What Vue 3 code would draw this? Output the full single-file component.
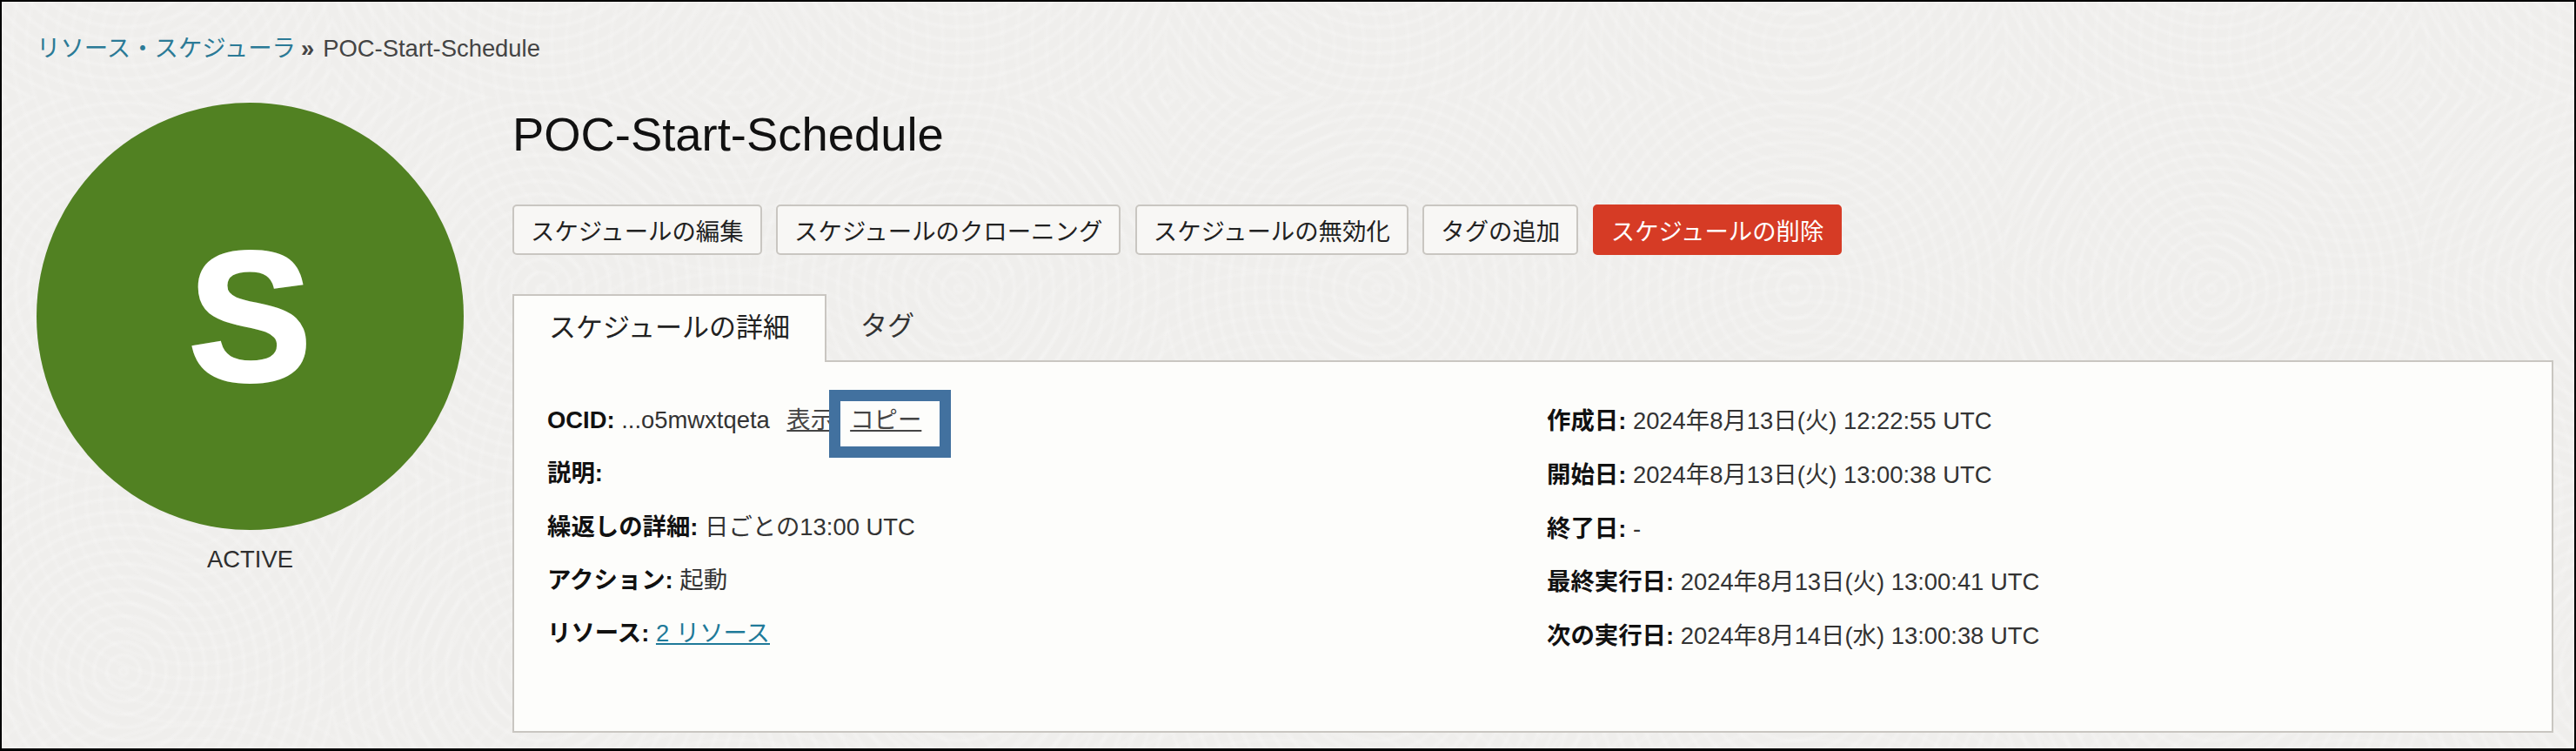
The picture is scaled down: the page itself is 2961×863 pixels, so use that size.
<template>
  <div class="page">
    <nav class="crumbs">
      <a class="crumb-link">リソース・スケジューラ</a>
      <span class="crumb-sep">»</span>
      <span>POC-Start-Schedule</span>
    </nav>

    <div class="layout">
      <aside class="status-col">
        <div class="status-circle">S</div>
        <div class="status-label">ACTIVE</div>
      </aside>

      <main class="content">
        <h1 class="title">POC-Start-Schedule</h1>

        <div class="actions">
          <button v-for="a in actions" :key="a" class="btn">{{ a }}</button>
          <button class="btn btn-danger">スケジュールの削除</button>
        </div>

        <div class="tabs">
          <div class="tab tab-active">スケジュールの詳細</div>
          <div class="tab">タグ</div>
        </div>

        <section class="panel">
          <div class="col col-left">
            <div class="row">
              <b>OCID:</b> ...o5mwxtqeta
              <a class="plain-link show-link">表示</a>
              <span class="copy-wrap">
                <a class="plain-link">コピー</a>
                <span class="highlight"></span>
              </span>
            </div>
            <div class="row"><b>説明:</b></div>
            <div class="row"><b>繰返しの詳細:</b> 日ごとの13:00 UTC</div>
            <div class="row"><b>アクション:</b> 起動</div>
            <div class="row"><b>リソース:</b> <a class="res-link">2 リソース</a></div>
          </div>
          <div class="col col-right">
            <div v-for="d in dates" :key="d.label" class="row">
              <b>{{ d.label }}:</b> {{ d.value }}
            </div>
          </div>
        </section>
      </main>
    </div>
  </div>
</template>

<script setup>
const actions = ['スケジュールの編集', 'スケジュールのクローニング', 'スケジュールの無効化', 'タグの追加']

const dates = [
  { label: '作成日', value: '2024年8月13日(火) 12:22:55 UTC' },
  { label: '開始日', value: '2024年8月13日(火) 13:00:38 UTC' },
  { label: '終了日', value: '-' },
  { label: '最終実行日', value: '2024年8月13日(火) 13:00:41 UTC' },
  { label: '次の実行日', value: '2024年8月14日(水) 13:00:38 UTC' }
]
</script>

<style scoped>
.page {
  box-sizing: border-box;
  width: 2961px;
  height: 863px;
  overflow: hidden;
  border: 2px solid #000;
  border-bottom-width: 3px;
  padding: 34px 24px 0 40px;
  font-family: "Liberation Sans", "Noto Sans CJK JP", sans-serif;
  font-size: 27.4px;
  color: #333;
  background-color: #efeeec;
  background-image:
    repeating-radial-gradient(circle at 50% 50%, transparent 0, rgba(255, 255, 255, 0.2) 4px, transparent 8px, transparent 15px),
    repeating-radial-gradient(circle at 50% 50%, transparent 0, rgba(255, 255, 255, 0.14) 4px, transparent 8px, transparent 17px);
  background-size: 480px 440px, 620px 520px;
  background-position: -100px -330px, -90px -210px;
}

.crumbs {
  height: 40px;
  line-height: 40px;
  color: #444;
  white-space: nowrap;
}

.crumb-link {
  color: #2b7a96;
}

.crumb-sep {
  margin: 0 10px 0 6px;
  font-weight: bold;
}

.layout {
  display: flex;
  gap: 56px;
  margin-top: 42px;
}

.status-col {
  flex: 0 0 491px;
}

.status-circle {
  width: 491px;
  height: 491px;
  border-radius: 50%;
  background: #518122;
  color: #fff;
  display: flex;
  align-items: center;
  justify-content: center;
  font-size: 212px;
  font-weight: bold;
  line-height: 1;
  -webkit-text-stroke: 4px #fff;
}

.status-label {
  margin-top: 16px;
  line-height: 36px;
  text-align: center;
  color: #2e2e2e;
}

.content {
  flex: 1;
  min-width: 0;
}

.title {
  margin: 0;
  height: 74px;
  line-height: 74px;
  font-size: 54.4px;
  font-weight: normal;
  color: #111;
}

.actions {
  display: flex;
  gap: 16.5px;
  margin-top: 43px;
}

.btn {
  box-sizing: border-box;
  height: 58px;
  padding: 0 19px;
  border: 2px solid #c9c6c1;
  border-radius: 5px;
  background: #f8f7f5;
  color: #222;
  font: inherit;
  white-space: nowrap;
}

.btn-danger {
  background: #d63b25;
  border-color: #d63b25;
  color: #fff;
}

.tabs {
  display: flex;
  position: relative;
  z-index: 1;
  height: 78px;
  margin-top: 45px;
  margin-bottom: -2px;
  font-size: 31px;
  color: #333;
}

.tab {
  box-sizing: border-box;
  height: 78px;
  line-height: 74px;
  padding: 0 39px;
}

.tab-active {
  width: 361px;
  padding: 0;
  text-align: center;
  background: #fdfdfb;
  border: 2px solid #c9c6c1;
  border-bottom: none;
  color: #222;
}

.panel {
  box-sizing: border-box;
  height: 428px;
  padding: 37px 38px 0;
  background: #fdfdfb;
  border: 2px solid #c9c6c1;
  display: grid;
  grid-template-columns: 1149px 1fr;
}

.row {
  white-space: nowrap;
  color: #333;
}

.row b {
  color: #111;
}

.col-left .row {
  height: 61.25px;
  line-height: 60px;
}

.col-right .row {
  height: 61.75px;
  line-height: 61px;
}

.plain-link {
  color: #444;
  text-decoration: underline;
}

.show-link {
  margin-left: 12px;
}

.res-link {
  color: #1f7a99;
  text-decoration: underline;
}

.copy-wrap {
  position: relative;
  margin-left: 18px;
}

.highlight {
  position: absolute;
  box-sizing: border-box;
  left: -24px;
  top: -19px;
  width: 140px;
  height: 78px;
  border: 13px solid #42719f;
}
</style>
